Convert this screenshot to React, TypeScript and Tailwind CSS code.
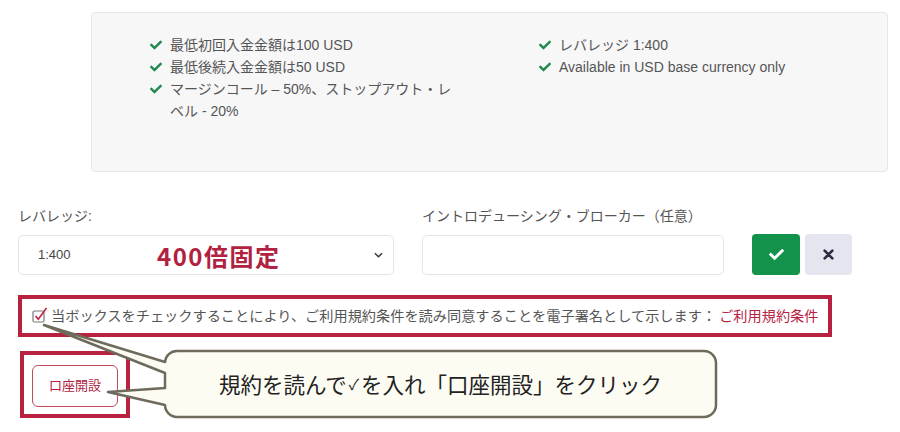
import React from "react";

const FONT = "font-['Liberation_Sans','Noto_Sans_CJK_JP',sans-serif]";

function Check({ className = "" }: { className?: string }) {
  return (
    <svg viewBox="0 0 512 512" className={className} fill="currentColor">
      <path d="M173.898 439.404l-166.4-166.4c-9.997-9.997-9.997-26.206 0-36.204l36.203-36.204c9.997-9.998 26.207-9.998 36.204 0L192 312.69 432.095 72.596c9.997-9.997 26.207-9.997 36.204 0l36.203 36.204c9.997 9.997 9.997 26.206 0 36.204l-294.4 294.401c-9.998 9.997-26.207 9.997-36.204-.001z" />
    </svg>
  );
}

function Item({ children }: { children: React.ReactNode }) {
  return (
    <li className="flex items-start">
      <span className="w-[20px] shrink-0 h-[22px] flex items-center">
        <Check className="w-[12px] h-[12px] text-[#1f8a4c]" />
      </span>
      <span>{children}</span>
    </li>
  );
}

export default function App() {
  return (
    <div className={`relative w-[900px] h-[432px] bg-white overflow-hidden ${FONT}`}>
      {/* Info panel */}
      <div className="pt-[12px] pl-[91px] pr-[12px]">
        <div className="h-[160px] rounded-[4px] border border-[#e6e6e8] bg-[#f7f7f8] pt-[21px] pl-[58px] flex text-[14px] leading-[22px] text-[#555]">
          <ul className="w-[389px]">
            <Item>最低初回入金金額は100 USD</Item>
            <Item>最低後続入金金額は50 USD</Item>
            <Item>
              マージンコール – 50%、ストップアウト・レ
              <br />
              ベル - 20%
            </Item>
          </ul>
          <ul>
            <Item>レバレッジ 1:400</Item>
            <Item>Available in USD base currency only</Item>
          </ul>
        </div>
      </div>

      {/* Form row */}
      <div className="mt-[34px] pl-[18px] flex items-end">
        <div className="w-[376px]">
          <div className="text-[14px] leading-[20px] text-[#555] mb-[9px]">レバレッジ:</div>
          <div className="relative h-[40px] rounded-[5px] border border-[#e3e5e8] flex items-center pl-[19px] pr-[10px] text-[13px] text-[#444]">
            <span className="flex-1">1:400</span>
            <svg viewBox="0 0 10 6" className="w-[9px] h-[6px]" fill="none" stroke="#333" strokeWidth="1.6">
              <path d="M1 1l4 4 4-4" />
            </svg>
            <span className="absolute left-[138px] top-[5px] text-[24px] leading-[30px] font-bold tracking-[1.5px] text-[#b0223f] font-['Noto_Sans_CJK_JP',sans-serif]">
              400倍固定
            </span>
          </div>
        </div>
        <div className="ml-[28px] w-[302px]">
          <div className="text-[14px] leading-[20px] text-[#555] mb-[9px]">
            イントロデューシング・ブローカー（任意）
          </div>
          <div className="h-[40px] rounded-[5px] border border-[#e3e5e8]" />
        </div>
        <button className="ml-[28px] w-[48px] h-[41px] rounded-[4px] bg-[#12924a] flex items-center justify-center">
          <Check className="w-[15px] h-[15px] text-white" />
        </button>
        <button className="ml-[5px] w-[47px] h-[41px] rounded-[4px] bg-[#e4e5ee] flex items-center justify-center">
          <svg viewBox="0 0 10 10" className="w-[11px] h-[11px]" stroke="#2b2d42" strokeWidth="2.4" strokeLinecap="round">
            <path d="M1.5 1.5l7 7M8.5 1.5l-7 7" />
          </svg>
        </button>
      </div>

      {/* Terms checkbox */}
      <div className="mt-[20px] ml-[18px] w-[814px] h-[42px] border-4 border-[#b8213f] flex items-center pl-[10px] text-[14.2px] text-[#555] whitespace-nowrap font-['Noto_Sans_CJK_JP',sans-serif]">
        <svg viewBox="0 0 16 16" className="w-[16px] h-[16px] mr-[3px] -mt-[3px] shrink-0">
          <rect x="1" y="4" width="11" height="11" rx="1.5" fill="white" stroke="#777" strokeWidth="1.2" />
          <path d="M3.5 9l2.8 3.2L14.5 1" fill="none" stroke="#c0213f" strokeWidth="1.6" />
        </svg>
        <span>
          当ボックスをチェックすることにより、ご利用規約条件を読み同意することを電子署名として示します：
        </span>
        <span className="ml-[3px] text-[#b8213f]">ご利用規約条件</span>
      </div>

      {/* Open account */}
      <div className="mt-[14px] ml-[20px] w-[110px] h-[67px] border-4 border-[#b8213f] pl-[8px] pt-[10px]">
        <button className="w-[86px] h-[42px] rounded-[6px] border border-[#c44a5e] text-[13px] text-[#b0223f] bg-white">
          口座開設
        </button>
      </div>

      {/* Callout annotation */}
      <svg className="absolute left-0 top-0 pointer-events-none" width="900" height="432" viewBox="0 0 900 432">
        <path
          d="M 177 351 H 704 A 12 12 0 0 1 716 363 V 405 A 12 12 0 0 1 704 417 H 177 A 12 12 0 0 1 165 405 L 108 392 L 165 388 V 373 L 44 325 L 165 362 A 12 12 0 0 1 177 351 Z"
          fill="#fdfcf2"
          stroke="#6e6a5c"
          strokeWidth="2.5"
          strokeLinejoin="round"
        />
      </svg>
      <div className="absolute left-[165px] top-[351px] w-[551px] h-[66px] flex items-center justify-center text-[21.5px] text-[#222] font-['Noto_Sans_CJK_JP',sans-serif]">
        規約を読んで<span className="text-[15px] mx-[2px]">✓</span>を入れ「口座開設」をクリック
      </div>
    </div>
  );
}
